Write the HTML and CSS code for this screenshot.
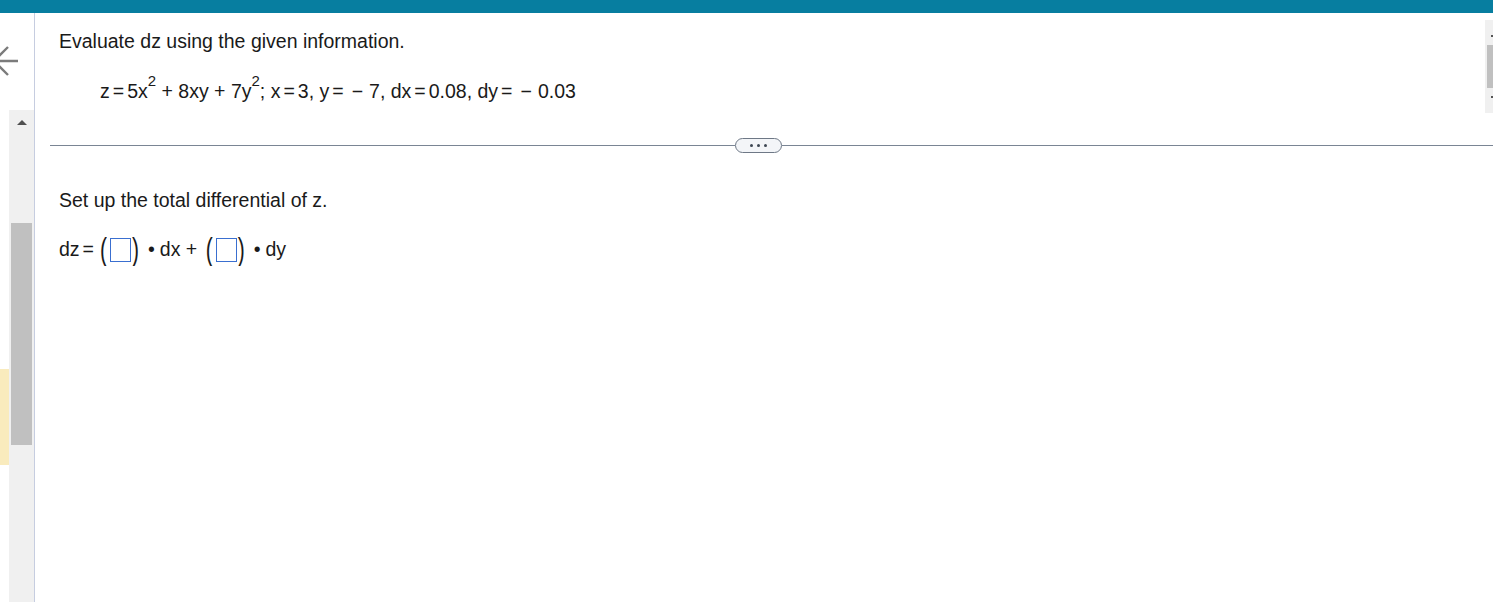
FILE: index.html
```html
<!DOCTYPE html>
<html lang="en">
<head>
    <meta charset="UTF-8">
    <meta name="viewport" content="width=device-width, initial-scale=1.0">
    <title>Total differential</title>
    <link rel="stylesheet" href="styles.css">
</head>
<body>

<header class="topbar"></header>

<div class="page">
    <aside class="sidebar">
        <div class="back">
            <svg width="18" height="32" viewBox="0 0 18 32">
                <path d="M-6 16 L18 16 M-6 16 L8 2 M-6 16 L8 30" fill="none" stroke="#7b7b7b" stroke-width="2.4"/>
            </svg>
        </div>
        <div class="rail">
            <div class="rail-mark"><div class="mark"></div></div>
            <div class="track">
                <div class="track-up"></div>
                <div class="thumb"></div>
            </div>
        </div>
    </aside>

    <main class="content">
        <p class="line first">Evaluate dz using the given information.</p>
        <p class="line equation">z<span class="eq">=</span>5x<sup>2</sup> + 8xy + 7y<sup>2</sup>; x<span class="eq">=</span>3, y<span class="eq">=</span><span class="neg">−</span>7, dx<span class="eq">=</span>0.08, dy<span class="eq">=</span><span class="neg">−</span>0.03</p>

        <div class="divider">
            <div class="rule rule-left"></div>
            <button class="more"><span></span><span></span><span></span></button>
            <div class="rule"></div>
        </div>

        <p class="line setup">Set up the total differential of z.</p>
        <p class="line answer">dz<span class="eq">=</span><span class="paren open">(</span><span class="box"></span><span class="paren close">)</span><span class="dot">•</span>dx + <span class="paren open">(</span><span class="box"></span><span class="paren close">)</span><span class="dot">•</span>dy</p>

        <div class="mini-scroll">
            <div class="tick"></div>
            <div class="mini-thumb"></div>
            <div class="tick"></div>
        </div>
    </main>
</div>

</body>
</html>
```

FILE: styles.css
```css
* {
    box-sizing: border-box;
}
body {
    margin: 0;
    font-family: "Liberation Sans", Arial, sans-serif;
    color: #1a1a1a;
    background: #ffffff;
    height: 602px;
    overflow: hidden;
    display: flex;
    flex-direction: column;
}
.topbar {
    height: 13px;
    background: #077ea0;
    flex: none;
}
.page {
    flex: 1;
    display: flex;
}
.sidebar {
    width: 35px;
    border-right: 1px solid #c6cde0;
    display: flex;
    flex-direction: column;
    overflow: hidden;
}
.back {
    height: 97px;
    padding-top: 32px;
}
.back svg {
    display: block;
}
.rail {
    flex: 1;
    display: flex;
}
.rail-mark {
    width: 9px;
    padding-top: 259px;
}
.mark {
    height: 96px;
    background: #f9ebbd;
}
.track {
    width: 25px;
    background: #f0f0f0;
    padding: 10px 0 0 2px;
}
.track-up {
    width: 0;
    height: 0;
    margin-left: 6px;
    border-left: 5px solid transparent;
    border-right: 5px solid transparent;
    border-bottom: 5px solid #505050;
}
.thumb {
    width: 21px;
    height: 222px;
    margin-top: 98px;
    background: #c0c0c0;
}

.content {
    flex: 1;
    position: relative;
    padding-top: 16px;
}
.line {
    margin: 0;
    font-size: 19.5px;
    line-height: 24px;
    padding-left: 24px;
}
.equation {
    margin-top: 26px;
    padding-left: 65px;
}
.equation sup {
    font-size: 15px;
    line-height: 0;
    vertical-align: 12px;
}
.eq {
    margin: 0 3px;
}
.neg {
    margin: 0 6px 0 5px;
}

.divider {
    display: flex;
    align-items: center;
    margin-top: 35px;
    padding-left: 15px;
}
.rule {
    flex: 1;
    height: 1px;
    background: #7a8594;
}
.rule-left {
    flex: 0 0 685px;
}
.more {
    width: 47px;
    height: 15px;
    padding: 0;
    border: 1px solid #6e7886;
    border-radius: 8px;
    background: #f3f5f8;
    display: flex;
    justify-content: center;
    align-items: center;
    gap: 4px;
}
.more span {
    width: 3px;
    height: 3px;
    border-radius: 50%;
    background: #3e4753;
}

.setup {
    margin-top: 35px;
}
.answer {
    margin-top: 22px;
    line-height: 30px;
}
.paren {
    display: inline-block;
    font-size: 21px;
    transform: scaleY(1.5);
}
.open {
    margin: 0 3px 0 3px;
}
.close {
    margin: 0 0 0 1px;
}
.box {
    display: inline-block;
    width: 21px;
    height: 24px;
    vertical-align: -6px;
    border: 1px solid #3a6fd0;
}
.dot {
    margin: 0 5px 0 9px;
}

.mini-scroll {
    position: absolute;
    top: 7px;
    right: 0;
    width: 8px;
    height: 93px;
    background: #f0f0f0;
    padding-top: 15px;
}
.tick {
    width: 2px;
    height: 2px;
    margin-left: 6px;
    background: #555555;
}
.mini-thumb {
    width: 6px;
    height: 43px;
    margin: 8px 0 8px 2px;
    background: #c0c0c0;
}
```
